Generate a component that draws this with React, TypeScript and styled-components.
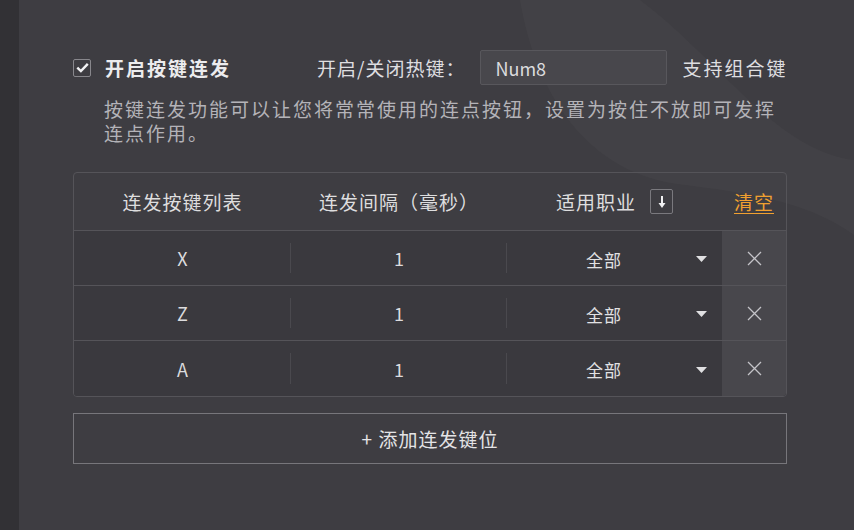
import React from 'react';
import styled, { createGlobalStyle } from 'styled-components';

const GlobalStyle = createGlobalStyle`
  html, body {
    margin: 0;
    padding: 0;
    background: #3e3d42;
  }
  #root {
    height: 530px;
  }
  * {
    box-sizing: border-box;
  }
`;

const FONT = `"Noto Sans CJK SC", "Noto Sans", "Liberation Sans", sans-serif`;

/* page frame */
const Page = styled.div`
  position: relative;
  display: flex;
  width: 854px;
  height: 530px;
  overflow: hidden;
  background: #3e3d42;
  font-family: ${FONT};
  color: #e4e4e6;
`;

const SideStrip = styled.div`
  width: 19px;
  flex-shrink: 0;
  background: #323135;
`;

/* decorative wave in the background */
const Wave = styled.svg`
  position: absolute;
  inset: 0;
  pointer-events: none;
  z-index: 0;
`;

const Main = styled.div`
  position: relative;
  z-index: 1;
  flex: 1;
  min-width: 0;
  padding: 50px 67px 0 54px;
  display: flex;
  flex-direction: column;
`;

/* top toggle row */
const TopRow = styled.div`
  display: flex;
  align-items: center;
  height: 35px;
  white-space: nowrap;

  & > * {
    flex-shrink: 0;
  }
`;

const CheckLabel = styled.label`
  display: flex;
  align-items: center;
  gap: 14px;
  font-size: 19px;
  font-weight: 700;
  letter-spacing: 2px;
  color: #ececee;
`;

const CheckBox = styled.span`
  flex-shrink: 0;
  width: 18px;
  height: 18px;
  border: 1px solid #88878c;
  border-radius: 2px;
  display: flex;
  align-items: center;
  justify-content: center;
`;

const HotkeyLabel = styled.span`
  margin-left: 86px;
  font-size: 19px;
  letter-spacing: 1px;
  color: #dedee0;
`;

const HotkeyInput = styled.div`
  margin-left: 15px;
  width: 187px;
  height: 35px;
  border: 1px solid #58575c;
  border-radius: 2px;
  background: #48474c;
  display: flex;
  align-items: center;
  padding-left: 14px;
  font-size: 18px;
  color: #dcdcde;
`;

const HotkeyHint = styled.span`
  margin-left: 15px;
  font-size: 19px;
  letter-spacing: 2px;
  color: #dedee0;
`;

const Description = styled.p`
  margin: 12px 0 0 31px;
  font-size: 19px;
  line-height: 24px;
  letter-spacing: 2px;
  color: #b4b3b8;
  white-space: nowrap;
`;

/* table */
const Table = styled.div`
  margin-top: 27px;
  border: 1px solid #555459;
  border-radius: 4px;
  overflow: hidden;
`;

const Row = styled.div<{ $header?: boolean }>`
  display: grid;
  grid-template-columns: 217px 216px 215px 1fr;
  height: ${p => (p.$header ? '58px' : '55px')};
  background: ${p => (p.$header ? 'transparent' : '#3a393e')};
  border-bottom: 1px solid #555459;

  &:last-child {
    border-bottom: none;
  }
`;

const HeadCell = styled.div`
  display: flex;
  align-items: center;
  justify-content: center;
  gap: 14px;
  font-size: 19px;
  letter-spacing: 1px;
  color: #dededf;
`;

const ClearLink = styled.a`
  font-size: 19px;
  letter-spacing: 1px;
  color: #f0a030;
  text-decoration: underline;
  text-underline-offset: 3px;
  cursor: pointer;
`;

const SortButton = styled.span`
  width: 23px;
  height: 25px;
  border: 1px solid #7a797e;
  border-radius: 2px;
  display: flex;
  align-items: center;
  justify-content: center;
`;

const Cell = styled.div<{ $divider?: boolean }>`
  position: relative;
  display: flex;
  align-items: center;
  justify-content: center;
  font-size: 18px;
  color: #dcdcde;

  &::after {
    content: '';
    display: ${p => (p.$divider ? 'block' : 'none')};
    position: absolute;
    right: 0;
    top: 12px;
    bottom: 12px;
    width: 1px;
    background: #4a494e;
  }
`;

const SelectCell = styled.div`
  display: flex;
  align-items: center;
  justify-content: space-between;
  padding: 2px 15px 0 79px;
  font-size: 17px;
  letter-spacing: 1px;
  color: #e2e2e4;
`;

const DeleteCell = styled.div`
  display: flex;
  align-items: center;
  justify-content: center;
  background: #48474c;
`;

const AddButton = styled.button`
  margin-top: 16px;
  height: 51px;
  border: 1px solid #77767b;
  border-radius: 0;
  background: transparent;
  font-family: ${FONT};
  font-size: 19px;
  letter-spacing: 1px;
  color: #e4e4e6;
  cursor: pointer;
`;

const Caret = () => (
  <svg width="11" height="6" viewBox="0 0 11 6">
    <path d="M0 0 L11 0 L5.5 6 Z" fill="#e0e0e2" />
  </svg>
);

const CloseIcon = () => (
  <svg width="15" height="15" viewBox="0 0 15 15">
    <path d="M1 1 L14 14 M14 1 L1 14" stroke="#c4c3c8" strokeWidth="1.3" />
  </svg>
);

const rows = [
  { key: 'X', interval: 1, job: '全部' },
  { key: 'Z', interval: 1, job: '全部' },
  { key: 'A', interval: 1, job: '全部' },
];

const App = () => {
  return (
    <>
      <GlobalStyle />
      <Page>
        <Wave width="854" height="530" viewBox="0 0 854 530">
          <path
            d="M520 0 C535 90 585 175 685 185 C765 195 812 205 854 235 L854 160 C775 150 720 60 640 0 Z"
            fill="#ffffff"
            fillOpacity="0.022"
          />
        </Wave>
        <SideStrip />
        <Main>
          <TopRow>
            <CheckLabel>
              <CheckBox>
                <svg width="13" height="11" viewBox="0 0 13 11">
                  <path d="M1.3 5.6 L4.9 9 L11.8 1.8" fill="none" stroke="#f2f2f4" strokeWidth="2.4" />
                </svg>
              </CheckBox>
              开启按键连发
            </CheckLabel>
            <HotkeyLabel>开启/关闭热键：</HotkeyLabel>
            <HotkeyInput>Num8</HotkeyInput>
            <HotkeyHint>支持组合键</HotkeyHint>
          </TopRow>

          <Description>
            按键连发功能可以让您将常常使用的连点按钮，设置为按住不放即可发挥
            <br />
            连点作用。
          </Description>

          <Table>
            <Row $header>
              <HeadCell>连发按键列表</HeadCell>
              <HeadCell>连发间隔（毫秒）</HeadCell>
              <HeadCell>
                适用职业
                <SortButton>
                  <svg width="10" height="14" viewBox="0 0 10 14">
                    <path d="M5 1 L5 9" stroke="#f0f0f2" strokeWidth="2" />
                    <path d="M1.5 8 L8.5 8 L5 13 Z" fill="#f0f0f2" />
                  </svg>
                </SortButton>
              </HeadCell>
              <HeadCell>
                <ClearLink>清空</ClearLink>
              </HeadCell>
            </Row>
            {rows.map(r => (
              <Row key={r.key}>
                <Cell $divider>{r.key}</Cell>
                <Cell $divider>{r.interval}</Cell>
                <SelectCell>
                  <span>{r.job}</span>
                  <Caret />
                </SelectCell>
                <DeleteCell>
                  <CloseIcon />
                </DeleteCell>
              </Row>
            ))}
          </Table>

          <AddButton>+ 添加连发键位</AddButton>
        </Main>
      </Page>
    </>
  );
};

export default App;
